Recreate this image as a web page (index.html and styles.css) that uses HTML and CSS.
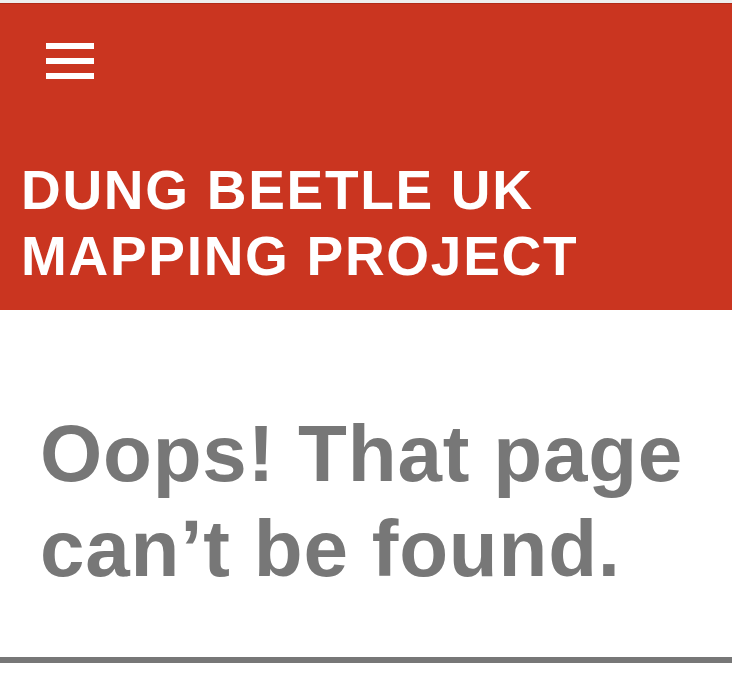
FILE: index.html
```html
<!DOCTYPE html>
<html lang="en">
<head>
<meta charset="utf-8">
<title>Page not found – Dung Beetle UK Mapping Project</title>
<link rel="stylesheet" href="styles.css">
</head>
<body>
<header class="site-header">
  <button class="menu-toggle" aria-label="Menu">
    <span class="bar"></span><span class="bar"></span><span class="bar"></span>
  </button>
  <h1 class="site-title">DUNG BEETLE UK MAPPING PROJECT</h1>
</header>
<main class="content">
  <h2 class="page-title">Oops! That page can’t be found.</h2>
</main>
<hr class="divider">
</body>
</html>
```
FILE: styles.css
```css
html, body {
  margin: 0;
  padding: 0;
  background: #fff;
  font-family: "Liberation Sans", Arial, sans-serif;
}
body {
  border-top: 3px solid #eeeeee;
}
.site-header {
  background: #ca3520;
  border-top: 1px solid #b02b18;
  padding: 39px 21px 21px 21px;
  display: flex;
  flex-direction: column;
}
.menu-toggle {
  display: flex;
  flex-direction: column;
  gap: 9px;
  background: none;
  border: 0;
  padding: 0;
  margin: 0 0 0 25px;
  width: 48px;
  cursor: pointer;
}
.bar {
  display: block;
  width: 48px;
  height: 6px;
  background: #fff;
}
.site-title {
  margin: 78px 0 0 0;
  color: #fff;
  font-size: 55px;
  line-height: 66px;
  letter-spacing: 1.7px;
  font-weight: 700;
  max-width: 620px;
}
.content {
  padding: 96px 30px 0 40px;
}
.page-title {
  margin: 0;
  color: #777777;
  font-size: 80px;
  line-height: 95px;
  letter-spacing: 0.8px;
  font-weight: 700;
}
.divider {
  margin: 61px 0 0 0;
  border: 0;
  height: 6px;
  background: #777777;
}
```
